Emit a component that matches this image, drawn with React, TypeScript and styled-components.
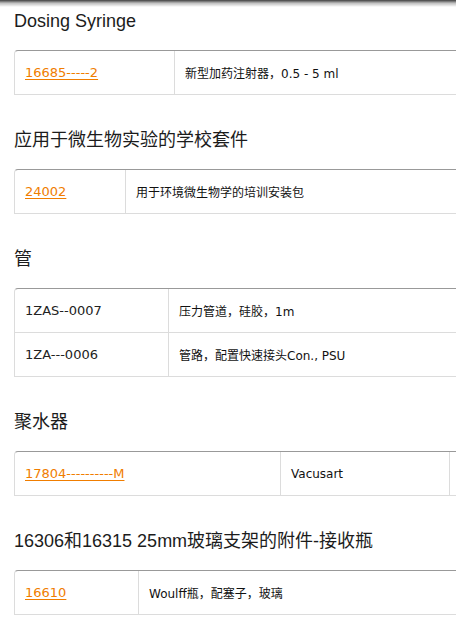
import styled, { createGlobalStyle } from "styled-components";

const GlobalStyle = createGlobalStyle`
    html, body {
        margin: 0;
        padding: 0;
        background: #fff;
        overflow: hidden;
    }
    body {
        font-family: "DejaVu Sans", Verdana, "Noto Sans CJK SC", sans-serif;
        color: #1a1a1a;
    }
`;

type Item = { code: string; link?: boolean; cells: string[] };
type Group = { title: string; cols: string; rows: Item[] };

const groups: Group[] = [
    {
        title: "Dosing Syringe",
        cols: "159px 1fr",
        rows: [{ code: "16685-----2", link: true, cells: ["新型加药注射器，0.5 - 5 ml"] }],
    },
    {
        title: "应用于微生物实验的学校套件",
        cols: "110px 1fr",
        rows: [{ code: "24002", link: true, cells: ["用于环境微生物学的培训安装包"] }],
    },
    {
        title: "管",
        cols: "153px 1fr",
        rows: [
            { code: "1ZAS--0007", cells: ["压力管道，硅胶，1m"] },
            { code: "1ZA---0006", cells: ["管路，配置快速接头Con., PSU"] },
        ],
    },
    {
        title: "聚水器",
        cols: "265px 169px 1fr",
        rows: [{ code: "17804----------M", link: true, cells: ["Vacusart", ""] }],
    },
    {
        title: "16306和16315 25mm玻璃支架的附件-接收瓶",
        cols: "123px 1fr",
        rows: [{ code: "16610", link: true, cells: ["Woulff瓶，配塞子，玻璃"] }],
    },
];

export default function App() {
    return (
        <>
            <GlobalStyle />
            <TopShade />
            <Page>
                {groups.map((g) => (
                    <Section key={g.title}>
                        <Title>{g.title}</Title>
                        <Table>
                            {g.rows.map((r) => (
                                <Row key={r.code} $cols={g.cols}>
                                    <CodeCell>
                                        {r.link ? <CodeLink href="#">{r.code}</CodeLink> : r.code}
                                    </CodeCell>
                                    {r.cells.map((c, i) => (
                                        <TextCell key={i}>{c}</TextCell>
                                    ))}
                                </Row>
                            ))}
                        </Table>
                    </Section>
                ))}
            </Page>
        </>
    );
}

const TopShade = styled.div`
    position: fixed;
    top: 0;
    left: 0;
    right: 0;
    height: 7px;
    background: linear-gradient(to bottom, rgba(0, 0, 0, 0.75), rgba(0, 0, 0, 0.25) 45%, rgba(0, 0, 0, 0));
    pointer-events: none;
    z-index: 2;
`;

const Page = styled.div`
    padding: 9px 0 0 14px;
`;

const Section = styled.section`
    margin-bottom: 33px;
`;

const Title = styled.h2`
    margin: 0 0 17px;
    font-family: "Liberation Sans", Arial, "Noto Sans CJK SC", sans-serif;
    font-size: 18px;
    line-height: 24px;
    font-weight: 400;
    color: #1c1c1c;
`;

const Table = styled.div`
    width: 640px;
    border-top: 1px solid #999;
    border-left: 1px solid #dcdcdc;
    border-top-left-radius: 4px;
`;

const Row = styled.div<{ $cols: string }>`
    display: grid;
    grid-template-columns: ${(p) => p.$cols};
    height: 43px;
    border-bottom: 1px solid #dcdcdc;
`;

const Cell = styled.div`
    display: flex;
    align-items: center;
    padding: 0 10px;
    white-space: nowrap;
    & + & {
        border-left: 1px solid #dcdcdc;
    }
`;

const CodeCell = styled(Cell)`
    font-size: 13px;
    color: #222;
`;

const TextCell = styled(Cell)`
    font-size: 12px;
    color: #111;
`;

const CodeLink = styled.a`
    color: #f07d00;
    text-decoration: underline;
    text-underline-offset: 2px;
`;
